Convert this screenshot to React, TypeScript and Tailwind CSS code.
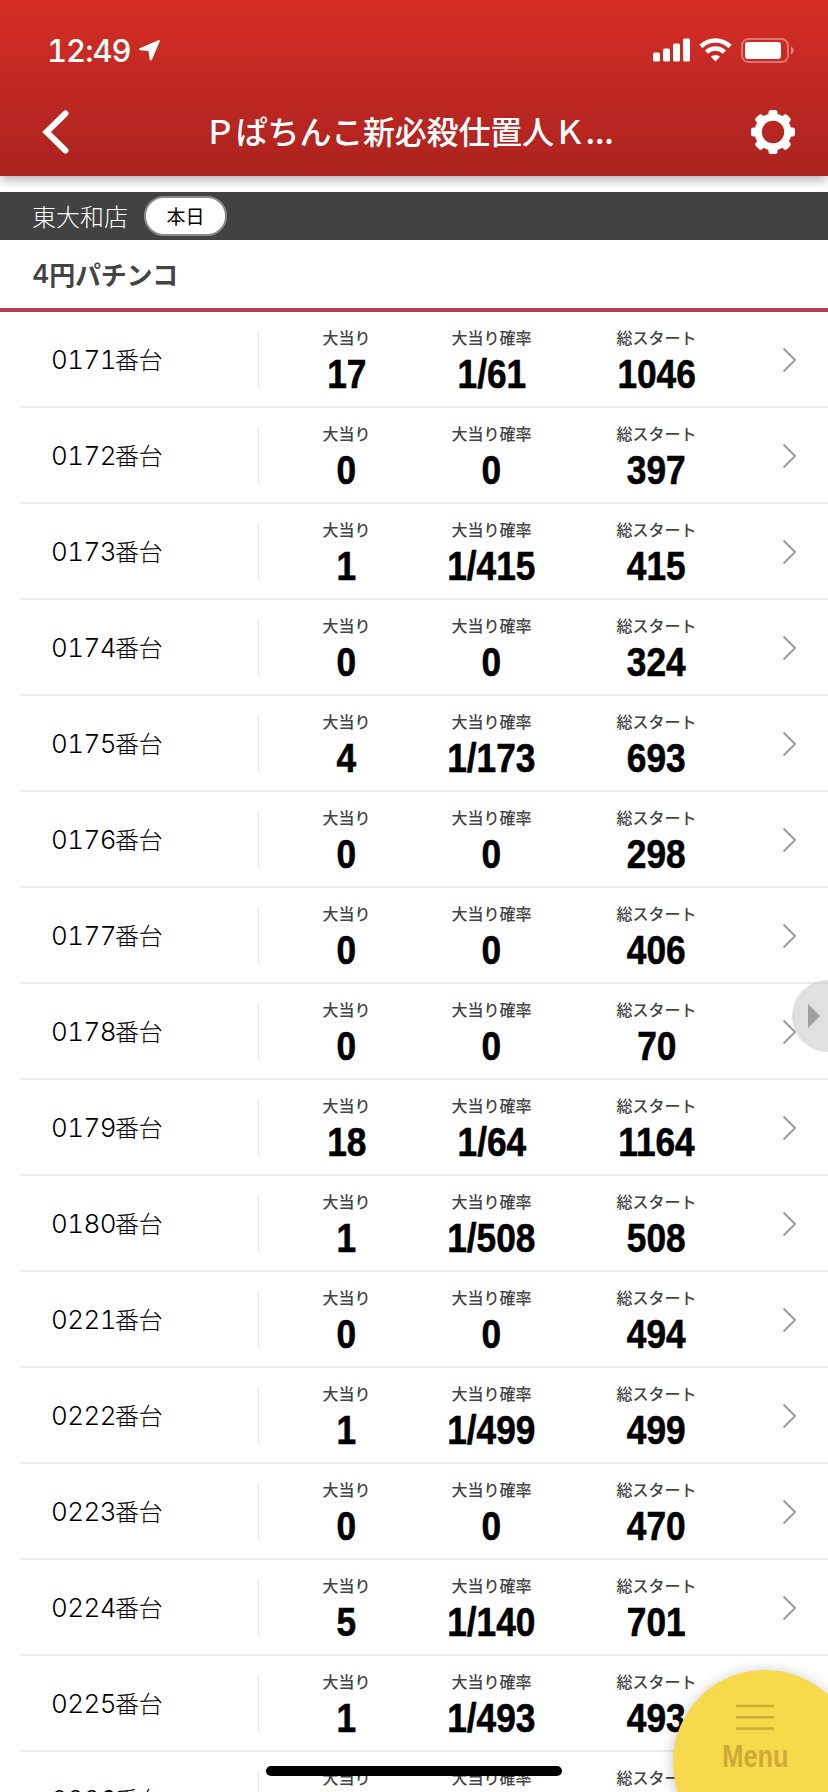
type Machine = {
  no: string
  hits: string
  rate: string
  starts: string
}

const machines: Machine[] = [
  { no: "0171", hits: "17", rate: "1/61", starts: "1046" },
  { no: "0172", hits: "0", rate: "0", starts: "397" },
  { no: "0173", hits: "1", rate: "1/415", starts: "415" },
  { no: "0174", hits: "0", rate: "0", starts: "324" },
  { no: "0175", hits: "4", rate: "1/173", starts: "693" },
  { no: "0176", hits: "0", rate: "0", starts: "298" },
  { no: "0177", hits: "0", rate: "0", starts: "406" },
  { no: "0178", hits: "0", rate: "0", starts: "70" },
  { no: "0179", hits: "18", rate: "1/64", starts: "1164" },
  { no: "0180", hits: "1", rate: "1/508", starts: "508" },
  { no: "0221", hits: "0", rate: "0", starts: "494" },
  { no: "0222", hits: "1", rate: "1/499", starts: "499" },
  { no: "0223", hits: "0", rate: "0", starts: "470" },
  { no: "0224", hits: "5", rate: "1/140", starts: "701" },
  { no: "0225", hits: "1", rate: "1/493", starts: "493" },
  { no: "0226", hits: "0", rate: "0", starts: "0" },
]

function StatusBar() {
  return (
    <div className="flex h-[88px] items-center justify-between pl-[47px] pr-[34px] pt-3">
      <div className="flex items-center">
        <span className="w-[92px] whitespace-nowrap font-['Inter',sans-serif] text-[31px] font-medium leading-none tracking-[-1px] tabular-nums">
          12:49
        </span>
        <svg width="21" height="21" viewBox="0 0 21 21" fill="currentColor">
          <path d="M19.3.2.7 8.300c-1 .5-.8 1.900.4 2l8.400.8 1.200 8.300c.2 1.300 1.800 1.400 2.200.3L20.700 1.600c.3-1-.5-1.800-1.400-1.400z" />
        </svg>
      </div>
      <div className="flex items-center gap-[9px]">
        <svg width="37" height="24" viewBox="0 0 37 24" fill="currentColor">
          <rect x="0" y="14.500" width="7" height="9" rx="1.500" />
          <rect x="10" y="10.500" width="7" height="13" rx="1.500" />
          <rect x="20" y="5.500" width="7" height="18" rx="1.500" />
          <rect x="30" y="0.500" width="7" height="23" rx="1.500" />
        </svg>
        <svg width="33" height="24" viewBox="0 0 33 24" fill="none" stroke="currentColor" strokeWidth="4.600">
          <path d="M1.900 8.500a20.800 20.800 0 0 1 29.200 0" />
          <path d="M7.500 14.200a12.800 12.800 0 0 1 18 0" />
          <path d="M16.500 23.500l-4.600-4.700a6.500 6.500 0 0 1 9.200 0z" fill="currentColor" stroke="none" />
        </svg>
        <svg width="53" height="25" viewBox="0 0 53 25" fill="currentColor">
          <rect x="1" y="1" width="46" height="23" rx="6.500" fill="none" stroke="currentColor" strokeWidth="2" opacity="0.350" />
          <rect x="4" y="4" width="36" height="17" rx="3" />
          <path d="M50 8.500c3.500 1.500 3.500 6.500 0 8z" opacity="0.450" />
        </svg>
      </div>
    </div>
  )
}

function GearIcon() {
  return (
    <svg width="44" height="44" viewBox="-22 -22 44 44">
      <circle r="14.800" fill="none" stroke="currentColor" strokeWidth="7.200" />
      {[0, 45, 90, 135, 180, 225, 270, 315].map((angle) => (
        <rect
          key={angle}
          x="-4.500"
          y="-22"
          width="9"
          height="8"
          rx="2.500"
          fill="currentColor"
          transform={`rotate(${angle})`}
        />
      ))}
    </svg>
  )
}

function Header() {
  return (
    <header className="h-44 shrink-0 bg-linear-to-b from-[#d62d26] to-[#ab231f] text-white shadow-[0_5px_10px_-1px_rgba(0,0,0,0.3)]">
      <StatusBar />
      <div className="flex h-[88px] items-center pl-[42px] pr-[33px]">
        <svg width="27" height="44" viewBox="0 0 27 44" fill="none" stroke="currentColor" strokeWidth="6">
          <path d="M23.500 3.500 4.500 22l19 18.500" strokeLinecap="round" />
        </svg>
        <h1 className="ml-[135px] flex-1 whitespace-nowrap pb-1 text-[32px] font-medium leading-none tracking-[-0.2px]">
          Ｐぱちんこ新必殺仕置人Ｋ...
        </h1>
        <GearIcon />
      </div>
    </header>
  )
}

function Stat({ label, value }: { label: string; value: string }) {
  return (
    <div className="flex flex-col items-center">
      <span className="text-base font-medium leading-5 text-[#444]">{label}</span>
      <span className="mt-1.5 origin-center scale-x-[0.860] font-['Liberation_Sans',sans-serif] text-[41px] font-bold leading-[42px] [-webkit-text-stroke:0.600px_black]">
        {value}
      </span>
    </div>
  )
}

function MachineRow({ machine }: { machine: Machine }) {
  return (
    <li className="ml-[21px] flex h-24 shrink-0 items-center border-b-2 border-[#eaeaea]">
      <div className="flex h-[57px] w-[238px] items-center border-r border-[#e8e8e8] pl-[30px] pt-0.5">
        <span className="w-[64px] font-['Inter',sans-serif] text-[26px] font-light leading-none tracking-[-0.600px] tabular-nums">
          {machine.no}
        </span>
        <span className="pb-0.5 text-[24px] font-light leading-none tracking-[-0.300px]">番台</span>
      </div>
      <div className="ml-[15px] grid h-full grid-cols-[145px_145px_185px] pt-[15px]">
        <Stat label="大当り" value={machine.hits} />
        <Stat label="大当り確率" value={machine.rate} />
        <Stat label="総スタート" value={machine.starts} />
      </div>
      <svg
        className="ml-[33px] mt-0.5"
        width="15"
        height="26"
        viewBox="0 0 15 26"
        fill="none"
        stroke="#9b9b9b"
        strokeWidth="2"
      >
        <path d="M1.500 1.500 13 13 1.500 24.500" />
      </svg>
    </li>
  )
}

export default function App() {
  return (
    <main className="relative flex h-[1792px] w-[828px] flex-col overflow-hidden bg-white font-['Noto_Sans_CJK_JP',sans-serif] text-black">
      <Header />
      <div className="mt-4 flex h-12 shrink-0 items-center bg-[#424242] pl-8 text-white">
        <span className="text-[24px] font-light leading-none">東大和店</span>
        <span className="ml-4 flex h-10 w-[83px] items-center justify-center rounded-full border-2 border-[#8c8c8c] bg-white pb-0.5 text-[19px] leading-none text-black">
          本日
        </span>
      </div>
      <h2 className="flex h-[72px] shrink-0 items-center border-b-4 border-[#b83a52] pl-8 text-[26px] font-bold leading-none tracking-[-0.2px] text-[#444]">
        <span className="font-['Inter',sans-serif] font-semibold">4</span>円パチンコ
      </h2>
      <ul className="flex flex-col">
        {machines.map((machine) => (
          <MachineRow key={machine.no} machine={machine} />
        ))}
      </ul>

      <button className="absolute left-[792px] top-[980px] flex size-[72px] items-center rounded-full bg-[#c6c6c6]/55 pl-4">
        <svg width="12" height="24" viewBox="0 0 12 24" fill="#9d9d9d">
          <path d="M0 0 12 12 0 24z" />
        </svg>
      </button>

      <button className="absolute left-[673px] top-[1670px] flex size-[184px] flex-col items-center rounded-full bg-[#f7da4b] pr-[20px] pt-[34px] text-[#cfab36] shadow-[0_2px_14px_rgba(0,0,0,0.25)]">
        <svg width="38" height="27" viewBox="0 0 38 27" stroke="currentColor" strokeWidth="2.500">
          <path d="M0 2h38M0 13.300h38M0 24.600h38" />
        </svg>
        <span className="mt-2 scale-x-[0.820] font-['Liberation_Sans',sans-serif] text-[31px] font-bold leading-9">Menu</span>
      </button>

      <div className="absolute left-[266px] top-[1766px] h-2.5 w-[296px] rounded-full bg-black" />
    </main>
  )
}
